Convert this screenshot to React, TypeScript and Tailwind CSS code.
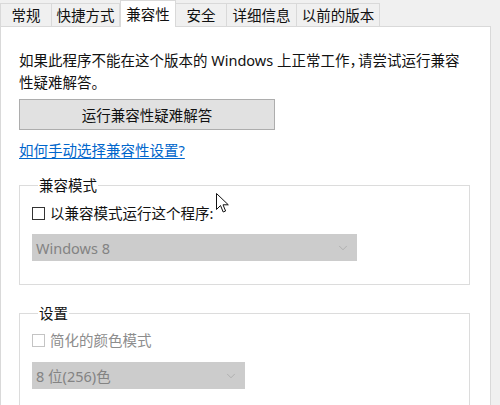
import { ChevronDown } from 'lucide-react';

const tabs = [
  { label: '常规', w: 'w-[52px]' },
  { label: '快捷方式', w: 'w-[68px]' },
  { label: '兼容性', w: 'w-[56px]', active: true },
  { label: '安全', w: 'w-[51px]' },
  { label: '详细信息', w: 'w-[70px]' },
  { label: '以前的版本', w: 'w-[83px]' },
];

function Cursor() {
  return (
    <svg
      className="pointer-events-none absolute left-[216px] top-[193px]"
      width="13"
      height="21"
      viewBox="0 0 13 21"
    >
      <path
        d="M0.5 0.5 L0.5 16.5 L4.5 12.5 L7.2 19 L9.6 18 L7 11.8 L12.3 11.8 Z"
        fill="#fff"
        stroke="#111"
        strokeWidth="1"
        strokeLinejoin="round"
      />
    </svg>
  );
}

function Dropdown({ label, w }: { label: string; w: string }) {
  return (
    <div
      className={`flex h-[27px] ${w} items-center justify-between border border-[#cccccc] bg-[#cccccc] pl-[3px] pr-[6px] text-[#838383]`}
    >
      <span className="leading-[20px]">{label}</span>
      <ChevronDown size={14} strokeWidth={1.2} className="text-[#a3a3a3]" />
    </div>
  );
}

export default function App() {
  return (
    <div className="relative flex h-[405px] w-[500px] flex-col overflow-hidden bg-[#f0f0f0] font-['Noto_Sans','Noto_Sans_CJK_SC',sans-serif] text-[14.5px] text-[#111111]">
      {/* tab strip */}
      <div className="flex h-[31px] items-end">
        {tabs.map((t) =>
          t.active ? (
            <div
              key={t.label}
              className={`${t.w} -mb-px z-10 flex h-[27px] items-center justify-center border border-b-0 border-[#d9d9d9] bg-white pb-[1px] leading-[20px]`}
            >
              {t.label}
            </div>
          ) : (
            <div
              key={t.label}
              className={`${t.w} flex h-[23px] items-center justify-center border border-b-0 border-l-0 first:border-l border-[#d9d9d9] bg-[#f0f0f0] leading-[20px]`}
            >
              {t.label}
            </div>
          ),
        )}
      </div>

      {/* panel */}
      <div className="w-[491px] flex-1 border border-b-0 border-[#d9d9d9] bg-white pl-[18px] pt-[22px]">
        <p className="whitespace-nowrap leading-[22px]">
          如果此程序不能在这个版本的 Windows 上正常工作<span className="tracking-[-8px]">，</span>
          <span className="pl-[2px]">请尝试运行兼容</span>
          <br />
          性疑难解答。
        </p>

        <button className="mt-[6px] flex h-[31px] w-[256px] items-center justify-center border border-[#adadad] bg-[#e1e1e1] leading-[20px]">
          运行兼容性疑难解答
        </button>

        <a className="mt-[9px] block w-fit leading-[22px] text-[#0066cc] underline underline-offset-2">
          如何手动选择兼容性设置?
        </a>

        <fieldset className="mt-[14px] w-[451px] border border-[#dcdcdc] pb-[23px] pl-[12px]">
          <legend className="ml-[6px] px-[1px] leading-[20px]">兼容模式</legend>
          <label className="mt-[8px] flex h-[20px] items-center gap-[5px]">
            <span className="h-[13px] w-[13px] border border-[#333333] bg-white" />
            <span className="leading-[20px]">以兼容模式运行这个程序:</span>
          </label>
          <div className="mt-[11px]">
            <Dropdown label="Windows 8" w="w-[325px]" />
          </div>
        </fieldset>

        <fieldset className="mt-[18px] w-[451px] border border-b-0 border-[#dcdcdc] pl-[12px]">
          <legend className="ml-[6px] px-[1px] leading-[20px]">设置</legend>
          <label className="mt-[7px] flex h-[20px] items-center gap-[5px] text-[#8d8d8d]">
            <span className="h-[13px] w-[13px] border border-[#c4c4c4] bg-white" />
            <span className="leading-[20px]">简化的颜色模式</span>
          </label>
          <div className="mt-[12px]">
            <Dropdown label="8 位(256)色" w="w-[213px]" />
          </div>
          <div className="h-[30px]" />
        </fieldset>
      </div>

      <Cursor />
    </div>
  );
}
